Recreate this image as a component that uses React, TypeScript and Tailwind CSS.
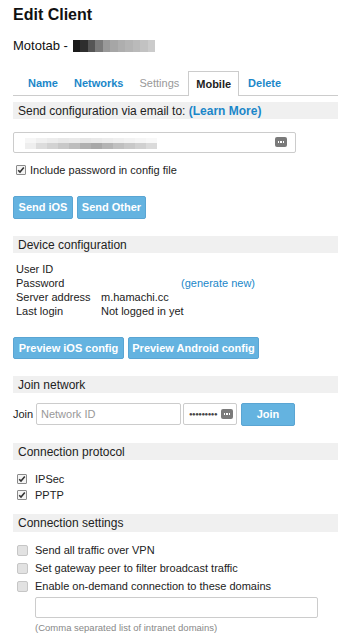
import React from 'react';

const font = { fontFamily: '"Liberation Sans", Arial, sans-serif' };

const KeyIcon = ({ className = '' }: { className?: string }) => (
  <span
    className={`absolute flex h-[10px] w-[12px] items-center justify-center gap-[1px] rounded-[2px] bg-[#7a7a7a] ${className}`}
  >
    <span className="h-[1.5px] w-[1.5px] bg-white" />
    <span className="h-[1.5px] w-[1.5px] bg-white" />
    <span className="h-[1.5px] w-[1.5px] bg-white" />
  </span>
);

const Checked = () => (
  <span className="flex h-[10px] w-[10px] shrink-0 items-center justify-center rounded-[1px] border border-[#8a8a8a] bg-[#f4f4f4]">
    <svg width="8" height="8" viewBox="0 0 8 8">
      <path d="M1.2 4.2 L3 6 L6.8 1.6" fill="none" stroke="#333" strokeWidth="1.6" />
    </svg>
  </span>
);

const Unchecked = () => (
  <span className="h-[11px] w-[11px] shrink-0 rounded-[2px] border border-[#c6c6c6] bg-[#e2e2e2]" />
);

const SectionBar = ({ children, h = 'h-[17px]' }: { children: React.ReactNode; h?: string }) => (
  <div className={`${h} flex items-center bg-[#f0f0f0] pl-[5px] text-[12px] text-[#222]`}>{children}</div>
);

const Btn = ({ children, className = '' }: { children: React.ReactNode; className?: string }) => (
  <button
    className={`flex items-center justify-center whitespace-nowrap rounded-[2px] border border-[#5aa5d3] bg-[#64b3e0] px-0 text-[11px] font-bold text-white ${className}`}
  >
    {children}
  </button>
);

const tabs = [
  { label: 'Name', cls: 'text-[#1b87c9] font-bold' },
  { label: 'Networks', cls: 'text-[#1b87c9] font-bold' },
  { label: 'Settings', cls: 'text-[#999] text-[11.5px]' },
  { label: 'Mobile', cls: 'text-[#222] font-bold', active: true },
  { label: 'Delete', cls: 'text-[#1b87c9] font-bold' },
];

const nameBlur = ['#1a1a1a', '#2e2e2e', '#555', '#7a7a7a', '#999', '#a6a6a6', '#aeaeae', '#b4b4b4', '#bababa', '#c2c2c2', '#cbcbcb'];
const mailTop = ['#f6f6f6', '#f0f0f0', '#ececec', '#e8e8e8', '#eaeaea', '#e6e6e6', '#e9e9e9', '#ececec', '#efefef', '#f2f2f2', '#f5f5f5', '#f8f8f8'];
const mailBottom = ['#eeeeee', '#dcdcdc', '#d2d2d2', '#c8c8c8', '#bdbdbd', '#b0b0b0', '#a8a8a8', '#b4b4b4', '#c0c0c0', '#c8c8c8', '#d0d0d0', '#dadada'];

export default function App() {
  return (
    <div className="w-[338px] bg-white pl-[13px] text-[11px] text-[#222]" style={font}>
      <h1 className="mt-[5px] h-[20px] text-[16px] font-bold leading-[20px] text-[#111]">Edit Client</h1>

      <div className="mt-[13px] flex h-[16px] items-center text-[13px] text-[#111]">
        <span>Mototab -</span>
        <span className="ml-[5px] flex h-[12px]">
          {nameBlur.map((c, i) => (
            <span key={i} className="h-full w-[7.5px]" style={{ backgroundColor: c }} />
          ))}
        </span>
      </div>

      <div className="mt-[18px] flex h-[24px] items-end border-b border-[#ccc] pl-[8px]">
        {tabs.map((t) => (
          <div
            key={t.label}
            className={`mr-[2px] flex h-[24px] items-center px-[7px] text-[11px] ${t.cls} ${
              t.active ? '-mb-px h-[25px] border border-b-0 border-[#ccc] bg-white' : ''
            }`}
          >
            {t.label}
          </div>
        ))}
      </div>

      <div className="mt-[6px]">
        <SectionBar>
          Send configuration via email to:&nbsp;<span className="font-bold text-[#1b87c9]">(Learn More)</span>
        </SectionBar>
      </div>

      <div className="relative mt-[13px] h-[21px] w-[283px] rounded-[2px] border border-[#ccc]">
        <div className="absolute left-[11px] top-[5px] flex flex-col">
          <div className="flex h-[5px]">
            {mailTop.map((c, i) => (
              <span key={i} className="h-full w-[11px]" style={{ backgroundColor: c }} />
            ))}
          </div>
          <div className="flex h-[6px]">
            {mailBottom.map((c, i) => (
              <span key={i} className="h-full w-[11px]" style={{ backgroundColor: c }} />
            ))}
          </div>
        </div>
        <KeyIcon className="right-[8px] top-[4px]" />
      </div>

      <div className="mt-[9px] flex h-[16px] items-center gap-[4px] pl-[3px]">
        <Checked />
        <span>Include password in config file</span>
      </div>

      <div className="mt-[18px] flex gap-[4px]">
        <Btn className="h-[23px] w-[60px]">Send iOS</Btn>
        <Btn className="h-[23px] w-[69px]">Send Other</Btn>
      </div>

      <div className="mt-[17px]">
        <SectionBar>Device configuration</SectionBar>
      </div>

      <div className="mt-[9px] pl-[3px] leading-[14px]">
        {[
          ['User ID', ''],
          ['Password', ''],
          ['Server address', 'm.hamachi.cc'],
          ['Last login', 'Not logged in yet'],
        ].map(([k, v], i) => (
          <div key={k} className="flex h-[14px]">
            <span className="w-[85px]">{k}</span>
            {i === 1 ? (
              <span className="ml-[80px] text-[#1b87c9]">(generate new)</span>
            ) : (
              <span>{v}</span>
            )}
          </div>
        ))}
      </div>

      <div className="mt-[19px] flex gap-[4px]">
        <Btn className="h-[22px] w-[111px]">Preview iOS config</Btn>
        <Btn className="h-[22px] w-[131px]">Preview Android config</Btn>
      </div>

      <div className="mt-[17px]">
        <SectionBar>Join network</SectionBar>
      </div>

      <div className="mt-[10px] flex h-[22px] items-center">
        <span className="w-[23px]">Join</span>
        <div className="flex h-[22px] w-[145px] items-center rounded-[2px] border border-[#ccc] pl-[4px] text-[#999]">
          Network ID
        </div>
        <div className="relative ml-[2px] flex h-[22px] w-[54px] items-center rounded-[2px] border border-[#ccc] pl-[5px] text-[6px] tracking-[-0.5px] text-[#444]">
          ●●●●●●●●●
          <KeyIcon className="right-[3px] top-[5px]" />
        </div>
        <Btn className="ml-[4px] h-[23px] w-[54px]">Join</Btn>
      </div>

      <div className="mt-[18px]">
        <SectionBar>Connection protocol</SectionBar>
      </div>

      <div className="mt-[11px] pl-[4px]">
        {['IPSec', 'PPTP'].map((l) => (
          <div key={l} className="flex h-[16px] items-center gap-[8px]">
            <Checked />
            <span>{l}</span>
          </div>
        ))}
      </div>

      <div className="mt-[11px]">
        <SectionBar h="h-[18px]">Connection settings</SectionBar>
      </div>

      <div className="mt-[9px] pl-[4px]">
        {[
          'Send all traffic over VPN',
          'Set gateway peer to filter broadcast traffic',
          'Enable on-demand connection to these domains',
        ].map((l) => (
          <div key={l} className="flex h-[18px] items-center gap-[7px]">
            <Unchecked />
            <span>{l}</span>
          </div>
        ))}
      </div>

      <div className="ml-[22px] mt-[2px] h-[21px] w-[283px] rounded-[2px] border border-[#ccc]" />
      <div className="ml-[22px] mt-[3px] h-[14px] text-[9.5px] leading-[14px] text-[#888]">
        (Comma separated list of intranet domains)
      </div>
      <div className="h-[9px]" />
    </div>
  );
}
